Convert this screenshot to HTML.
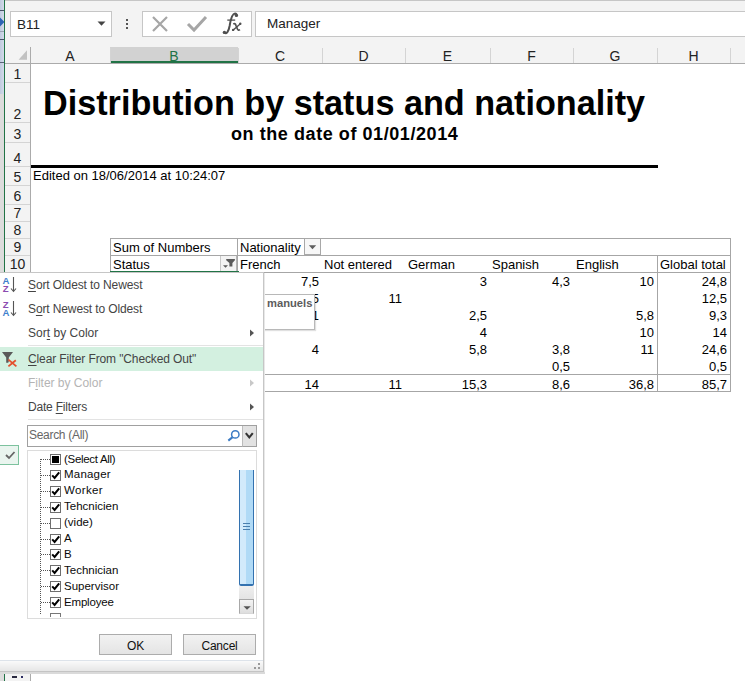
<!DOCTYPE html>
<html><head><meta charset="utf-8">
<style>
*{margin:0;padding:0;box-sizing:border-box}
html,body{width:745px;height:681px;overflow:hidden;background:#fff;font-family:"Liberation Sans",sans-serif;color:#000}
.a{position:absolute}
.t{position:absolute;white-space:nowrap;line-height:1}
.r{position:absolute;white-space:nowrap;line-height:1;text-align:right}
.ch{position:absolute;top:48.5px;height:14px;font-size:14px;line-height:14px;text-align:center;color:#222}
.rh{position:absolute;left:5px;width:25px;font-size:14px;text-align:center;color:#222;line-height:1}
.v{position:absolute;font-size:13px;line-height:1;text-align:right;white-space:nowrap}
.mi{position:absolute;left:28px;font-size:12px;letter-spacing:-0.2px;line-height:1;color:#444;white-space:nowrap}
u{text-decoration:underline;text-underline-offset:1.5px}
.li{position:absolute;left:64px;font-size:11.5px;line-height:1;color:#0a0a0a;white-space:nowrap}
</style></head><body>
<div class="a" style="left:0px;top:0px;width:4px;height:94px;background:linear-gradient(90deg,#bfcade,#d3dbea)"></div>
<div class="a" style="left:0px;top:94px;width:4px;height:587px;background:#dcdcdc"></div>
<div class="a" style="left:0px;top:10px;width:4px;height:1px;background:#4a5468"></div>
<div class="a" style="left:0px;top:31px;width:4px;height:1px;background:#9aa3b3"></div>
<div class="a" style="left:0px;top:39px;width:4px;height:1px;background:#4a5468"></div>
<div class="a" style="left:0px;top:62px;width:4px;height:1px;background:#5a6478"></div>
<svg class="a" style="left:0;top:17px" width="5" height="10"><path d="M0 0.5 L4.5 5 L0 9.5 Z" fill="#2d64b4"/></svg>
<div class="a" style="left:4px;top:0px;width:1px;height:681px;background:#217346"></div>
<div class="a" style="left:5px;top:0px;width:740px;height:47px;background:#f3f3f3"></div>
<div class="a" style="left:5px;top:0px;width:740px;height:1px;background:#c6c6c6"></div>
<div class="a" style="left:10px;top:11px;width:102px;height:26px;background:#fff;border:1px solid #c6c6c6"></div>
<div class="t" style="left:17px;top:18px;font-size:13.5px;color:#222">B11</div>
<svg class="a" style="left:97px;top:21px" width="9" height="6"><path d="M0.5 0.5 H8.5 L4.5 4.8 Z" fill="#444"/></svg>
<div class="a" style="left:126px;top:19px;width:2px;height:2px;background:#555"></div>
<div class="a" style="left:126px;top:23px;width:2px;height:2px;background:#555"></div>
<div class="a" style="left:126px;top:27px;width:2px;height:2px;background:#555"></div>
<div class="a" style="left:142px;top:11px;width:110px;height:26px;background:#fff;border:1px solid #c6c6c6"></div>
<svg class="a" style="left:150px;top:14px" width="100" height="22" viewBox="0 0 100 22">
<path d="M3 3 L17 17 M17 3 L3 17" stroke="#a6a6a6" stroke-width="2.2" fill="none"/>
<path d="M38 10 L44 16 L56 3" stroke="#a6a6a6" stroke-width="3" fill="none"/>
</svg>
<svg class="a" style="left:215px;top:10px" width="35" height="30" viewBox="0 0 35 30">
<path d="M9.2 22.6 C11.5 24.5 13.6 21.5 14.6 16 C15.6 9.5 17 3.6 20 3.5 C21.3 3.5 21.8 4.4 21.5 5.3" stroke="#4f4f4f" stroke-width="2" fill="none"/>
<circle cx="21.4" cy="5.4" r="1.7" fill="#4f4f4f"/>
<circle cx="9.4" cy="22.4" r="1.7" fill="#4f4f4f"/>
<path d="M12.3 10.1 H20.2" stroke="#4f4f4f" stroke-width="1.3"/>
<path d="M18.3 13.9 C19.6 13.2 20.4 13.8 21 15.5 L22.4 19 C22.9 20.3 23.8 20.4 25 19.6" stroke="#4f4f4f" stroke-width="1.7" fill="none"/>
<path d="M25.4 13.8 L18 20.2" stroke="#4f4f4f" stroke-width="1.4"/>
<circle cx="25.3" cy="13.8" r="1.2" fill="#4f4f4f"/>
<circle cx="18.1" cy="19.9" r="1.2" fill="#4f4f4f"/>
</svg>
<div class="a" style="left:255px;top:11px;width:495px;height:26px;background:#fff;border:1px solid #c6c6c6"></div>
<div class="t" style="left:267px;top:17px;font-size:13.5px;color:#222">Manager</div>
<div class="a" style="left:5px;top:47px;width:740px;height:16px;background:#f3f3f3"></div>
<div class="a" style="left:5px;top:63px;width:740px;height:1px;background:#ababab"></div>
<div class="a" style="left:110px;top:47px;width:128px;height:16px;background:#d2d2d2"></div>
<div class="a" style="left:110px;top:61px;width:128px;height:2px;background:#217346"></div>
<div class="ch" style="left:30px;width:80px;color:#222">A</div>
<div class="ch" style="left:110px;width:128px;color:#217346">B</div>
<div class="a" style="left:110px;top:48px;width:1px;height:15px;background:#d4d4d4"></div>
<div class="ch" style="left:238px;width:84px;color:#222">C</div>
<div class="a" style="left:238px;top:48px;width:1px;height:15px;background:#d4d4d4"></div>
<div class="ch" style="left:322px;width:83px;color:#222">D</div>
<div class="a" style="left:322px;top:48px;width:1px;height:15px;background:#d4d4d4"></div>
<div class="ch" style="left:405px;width:85px;color:#222">E</div>
<div class="a" style="left:405px;top:48px;width:1px;height:15px;background:#d4d4d4"></div>
<div class="ch" style="left:490px;width:83px;color:#222">F</div>
<div class="a" style="left:490px;top:48px;width:1px;height:15px;background:#d4d4d4"></div>
<div class="ch" style="left:573px;width:84px;color:#222">G</div>
<div class="a" style="left:573px;top:48px;width:1px;height:15px;background:#d4d4d4"></div>
<div class="ch" style="left:657px;width:73px;color:#222">H</div>
<div class="a" style="left:657px;top:48px;width:1px;height:15px;background:#d4d4d4"></div>
<div class="ch" style="left:730px;width:70px;color:#222"></div>
<div class="a" style="left:730px;top:48px;width:1px;height:15px;background:#d4d4d4"></div>
<svg class="a" style="left:14px;top:50px" width="14" height="12"><path d="M13 0.3 L13 9.7 L4.6 9.7 Z" fill="#c2c2c2"/></svg>
<div class="a" style="left:5px;top:64px;width:25px;height:617px;background:#f3f3f3"></div>
<div class="a" style="left:30px;top:47px;width:1px;height:634px;background:#ababab"></div>
<div class="rh" style="top:67px">1</div>
<div class="a" style="left:5px;top:82px;width:25px;height:1px;background:#d4d4d4"></div>
<div class="rh" style="top:107px">2</div>
<div class="a" style="left:5px;top:122px;width:25px;height:1px;background:#d4d4d4"></div>
<div class="rh" style="top:127px">3</div>
<div class="a" style="left:5px;top:142px;width:25px;height:1px;background:#d4d4d4"></div>
<div class="rh" style="top:151px">4</div>
<div class="a" style="left:5px;top:166px;width:25px;height:1px;background:#d4d4d4"></div>
<div class="rh" style="top:170px">5</div>
<div class="a" style="left:5px;top:185px;width:25px;height:1px;background:#d4d4d4"></div>
<div class="rh" style="top:189px">6</div>
<div class="a" style="left:5px;top:204px;width:25px;height:1px;background:#d4d4d4"></div>
<div class="rh" style="top:206px">7</div>
<div class="a" style="left:5px;top:221px;width:25px;height:1px;background:#d4d4d4"></div>
<div class="rh" style="top:223px">8</div>
<div class="a" style="left:5px;top:238px;width:25px;height:1px;background:#d4d4d4"></div>
<div class="rh" style="top:240px">9</div>
<div class="a" style="left:5px;top:255px;width:25px;height:1px;background:#d4d4d4"></div>
<div class="rh" style="top:257px">10</div>
<div class="a" style="left:5px;top:272px;width:25px;height:1px;background:#d4d4d4"></div>
<div class="a" style="left:12px;top:676px;width:5px;height:2px;background:#2a2a40"></div>
<div class="a" style="left:21px;top:676px;width:2px;height:2px;background:#2a2a60"></div>
<div class="t" style="left:43px;top:86px;font-size:34.2px;font-weight:bold">Distribution by status and nationality</div>
<div class="t" style="left:231px;top:125px;font-size:18px;font-weight:bold;letter-spacing:0.57px">on the date of 01/01/2014</div>
<div class="a" style="left:31px;top:165px;width:627px;height:3px;background:#000"></div>
<div class="t" style="left:33px;top:169px;font-size:13px">Edited on 18/06/2014 at 10:24:07</div>
<div class="a" style="left:110px;top:238px;width:621px;height:1px;background:#a6a6a6"></div>
<div class="a" style="left:110px;top:255px;width:621px;height:1px;background:#a6a6a6"></div>
<div class="a" style="left:110px;top:272px;width:621px;height:1px;background:#a6a6a6"></div>
<div class="a" style="left:110px;top:374px;width:621px;height:1px;background:#a6a6a6"></div>
<div class="a" style="left:110px;top:391px;width:621px;height:1px;background:#a6a6a6"></div>
<div class="a" style="left:110px;top:238px;width:1px;height:154px;background:#a6a6a6"></div>
<div class="a" style="left:237px;top:238px;width:1px;height:154px;background:#a6a6a6"></div>
<div class="a" style="left:657px;top:255px;width:1px;height:137px;background:#a6a6a6"></div>
<div class="a" style="left:730px;top:238px;width:1px;height:154px;background:#a6a6a6"></div>
<div class="a" style="left:110px;top:271px;width:129px;height:2px;background:#217346"></div>
<div class="t" style="left:113px;top:241px;font-size:13px">Sum of Numbers</div>
<div class="t" style="left:113px;top:258px;font-size:13px">Status</div>
<div class="t" style="left:240px;top:241px;font-size:13px">Nationality</div>
<div class="a" style="left:304px;top:238px;width:17px;height:17px;background:#f7f7f7;border:1px solid #a8a8a8"></div>
<svg class="a" style="left:308px;top:245px" width="9" height="5"><path d="M0.8 0.3 H8.2 L4.5 4.3 Z" fill="#5e5e5e"/></svg>
<div class="a" style="left:220px;top:256px;width:17px;height:15px;background:#f3f3f3;border-left:1px solid #c8c8c8;border-right:1px solid #b4b4b4"></div>
<svg class="a" style="left:222px;top:258px" width="15" height="12"><path d="M4.2 1 H12.9 V2.2 L10.4 5 V8.4 H7.4 V5 L4.2 2.2 Z" fill="#5a5a5a"/><path d="M1 7.2 H6 L3.5 9.8 Z" fill="#5a5a5a"/></svg>
<div class="t" style="left:240px;top:258px;font-size:13px">French</div>
<div class="t" style="left:324px;top:258px;font-size:13px">Not entered</div>
<div class="t" style="left:408px;top:258px;font-size:13px">German</div>
<div class="t" style="left:492px;top:258px;font-size:13px">Spanish</div>
<div class="t" style="left:576px;top:258px;font-size:13px">English</div>
<div class="t" style="left:660px;top:258px;font-size:13px">Global total</div>
<div class="v" style="right:426px;top:275px">7,5</div>
<div class="v" style="right:258px;top:275px">3</div>
<div class="v" style="right:175px;top:275px">4,3</div>
<div class="v" style="right:91px;top:275px">10</div>
<div class="v" style="right:18px;top:275px">24,8</div>
<div class="v" style="right:426px;top:292px">1,5</div>
<div class="v" style="right:343px;top:292px">11</div>
<div class="v" style="right:18px;top:292px">12,5</div>
<div class="v" style="right:426px;top:309px">1</div>
<div class="v" style="right:258px;top:309px">2,5</div>
<div class="v" style="right:91px;top:309px">5,8</div>
<div class="v" style="right:18px;top:309px">9,3</div>
<div class="v" style="right:258px;top:326px">4</div>
<div class="v" style="right:91px;top:326px">10</div>
<div class="v" style="right:18px;top:326px">14</div>
<div class="v" style="right:426px;top:343px">4</div>
<div class="v" style="right:258px;top:343px">5,8</div>
<div class="v" style="right:175px;top:343px">3,8</div>
<div class="v" style="right:91px;top:343px">11</div>
<div class="v" style="right:18px;top:343px">24,6</div>
<div class="v" style="right:175px;top:360px">0,5</div>
<div class="v" style="right:18px;top:360px">0,5</div>
<div class="v" style="right:426px;top:378px">14</div>
<div class="v" style="right:343px;top:378px">11</div>
<div class="v" style="right:258px;top:378px">15,3</div>
<div class="v" style="right:175px;top:378px">8,6</div>
<div class="v" style="right:91px;top:378px">36,8</div>
<div class="v" style="right:18px;top:378px">85,7</div>
<div class="a" style="left:250px;top:294px;width:65px;height:36px;background:#fff;border:1px solid #b8b8b8;box-shadow:1px 1px 1px rgba(0,0,0,0.12)"></div>
<div class="t" style="left:267px;top:298px;font-size:11.2px;font-weight:bold;color:#5c5c5c">manuels</div>
<div class="a" style="left:0px;top:272px;width:264px;height:401px;background:#fff"></div>
<div class="a" style="left:0px;top:272px;width:264px;height:1px;background:#c6c6c6"></div>
<div class="a" style="left:263px;top:272px;width:1px;height:401px;background:#c6c6c6"></div>
<div class="a" style="left:264px;top:273px;width:1px;height:401px;background:#e8e8e8"></div>
<div class="a" style="left:0px;top:671px;width:264px;height:1px;background:#c4c4c4"></div>
<div class="a" style="left:0px;top:672px;width:265px;height:2px;background:#dadada"></div>
<svg class="a" style="left:0;top:274px" width="20" height="46" viewBox="0 0 20 46">
<g font-family="Liberation Sans" font-weight="bold" font-size="9.6">
<text x="2.4" y="9.8" fill="#3f7fcc">A</text>
<text x="2.8" y="17.8" fill="#8b4cb0">Z</text>
<text x="2.8" y="34" fill="#8b4cb0">Z</text>
<text x="2.4" y="42" fill="#3f7fcc">A</text>
</g>
<path d="M13.5 3 V17.5 M11 14.5 L13.5 17.5 L16 14.5 M13.5 27 V41.5 M11 38.5 L13.5 41.5 L16 38.5" stroke="#555" stroke-width="1.1" fill="none"/>
</svg>
<div class="a" style="left:28px;top:345px;width:235px;height:1px;background:#e3e3e3"></div>
<div class="a" style="left:0px;top:347px;width:263px;height:24px;background:#d3f0e0"></div>
<div class="a" style="left:28px;top:419px;width:235px;height:1px;background:#e3e3e3"></div>
<div class="mi" style="top:279px;color:#444;letter-spacing:-0.11px"><u>S</u>ort Oldest to Newest</div>
<div class="mi" style="top:303px;color:#444;letter-spacing:-0.12px">S<u>o</u>rt Newest to Oldest</div>
<div class="mi" style="top:327px;color:#444;letter-spacing:0.02px">Sor<u>t</u> by Color</div>
<div class="mi" style="top:352.5px;color:#444;letter-spacing:-0.12px"><u>C</u>lear Filter From "Checked Out"</div>
<div class="mi" style="top:376.5px;color:#b4b4b4;letter-spacing:-0.02px">F<u>i</u>lter by Color</div>
<div class="mi" style="top:400.5px;color:#444;letter-spacing:-0.2px">Date <u>F</u>ilters</div>
<svg class="a" style="left:249px;top:328.5px" width="6" height="8"><path d="M1 0.5 L5 4 L1 7.5 Z" fill="#555"/></svg>
<svg class="a" style="left:249px;top:378.5px" width="6" height="8"><path d="M1 0.5 L5 4 L1 7.5 Z" fill="#c8c8c8"/></svg>
<svg class="a" style="left:249px;top:402.5px" width="6" height="8"><path d="M1 0.5 L5 4 L1 7.5 Z" fill="#555"/></svg>
<svg class="a" style="left:0;top:350px" width="20" height="18" viewBox="0 0 20 18">
<path d="M2 1.9 H13 L8.8 7.5 V11.6 L8.2 12.8 H6.2 V7.5 Z" fill="#5a5a5a"/>
<path d="M8.4 9.6 L16.4 16.4 M15.8 10.2 L8.4 16.4" stroke="#e4502e" stroke-width="1.8"/>
</svg>
<div class="a" style="left:27px;top:425px;width:230px;height:22px;background:#fff;border:1px solid #a0a0a0"></div>
<div class="t" style="left:29px;top:429px;font-size:12px;letter-spacing:-0.3px;color:#666">Search (All)</div>
<svg class="a" style="left:226px;top:428px" width="16" height="16" viewBox="0 0 16 16">
<circle cx="9.3" cy="6.4" r="3.7" stroke="#3d7cc4" stroke-width="1.5" fill="none"/>
<path d="M6.6 9.1 L2.3 12.6" stroke="#3d7cc4" stroke-width="2"/>
</svg>
<div class="a" style="left:242px;top:426px;width:15px;height:21px;background:#e2e2e2;border-left:1px solid #bcbcbc;border-right:1px solid #a0a0a0;border-bottom:1px solid #a0a0a0"></div>
<svg class="a" style="left:244px;top:431px" width="11" height="9"><path d="M1.8 2.2 L5.3 6.4 L8.8 2.2" stroke="#333" stroke-width="2.1" fill="none"/></svg>
<div class="a" style="left:27px;top:450px;width:230px;height:169px;background:#fff;border:1px solid #dcdcdc"></div>
<div class="a" style="left:40px;top:459px;width:1px;height:155px;border-left:1px dotted #555"></div>
<div class="a" style="left:41px;top:459.0px;width:9px;height:1px;border-top:1px dotted #555"></div>
<div class="a" style="left:50px;top:454px;width:11px;height:11px;background:#fff;border:1px solid #6e6e6e"></div>
<div class="a" style="left:52px;top:456px;width:7px;height:7px;background:#000"></div>
<div class="li" style="top:453.5px;letter-spacing:-0.3px">(Select All)</div>
<div class="a" style="left:41px;top:474.9px;width:9px;height:1px;border-top:1px dotted #555"></div>
<div class="a" style="left:50px;top:470px;width:11px;height:11px;background:#fff;border:1px solid #6e6e6e"></div>
<svg class="a" style="left:51px;top:471px" width="9" height="9" viewBox="0 0 9 9"><path d="M1.2 4.4 L3.6 7 L8.2 1.3" stroke="#000" stroke-width="2" fill="none"/></svg>
<div class="li" style="top:469.4px;letter-spacing:0.2px">Manager</div>
<div class="a" style="left:41px;top:490.8px;width:9px;height:1px;border-top:1px dotted #555"></div>
<div class="a" style="left:50px;top:486px;width:11px;height:11px;background:#fff;border:1px solid #6e6e6e"></div>
<svg class="a" style="left:51px;top:487px" width="9" height="9" viewBox="0 0 9 9"><path d="M1.2 4.4 L3.6 7 L8.2 1.3" stroke="#000" stroke-width="2" fill="none"/></svg>
<div class="li" style="top:485.3px;letter-spacing:0.35px">Worker</div>
<div class="a" style="left:41px;top:506.7px;width:9px;height:1px;border-top:1px dotted #555"></div>
<div class="a" style="left:50px;top:502px;width:11px;height:11px;background:#fff;border:1px solid #6e6e6e"></div>
<svg class="a" style="left:51px;top:503px" width="9" height="9" viewBox="0 0 9 9"><path d="M1.2 4.4 L3.6 7 L8.2 1.3" stroke="#000" stroke-width="2" fill="none"/></svg>
<div class="li" style="top:501.2px;letter-spacing:0px">Tehcnicien</div>
<div class="a" style="left:41px;top:522.6px;width:9px;height:1px;border-top:1px dotted #555"></div>
<div class="a" style="left:50px;top:518px;width:11px;height:11px;background:#fff;border:1px solid #6e6e6e"></div>
<div class="li" style="top:517.1px;letter-spacing:0px">(vide)</div>
<div class="a" style="left:41px;top:538.5px;width:9px;height:1px;border-top:1px dotted #555"></div>
<div class="a" style="left:50px;top:534px;width:11px;height:11px;background:#fff;border:1px solid #6e6e6e"></div>
<svg class="a" style="left:51px;top:535px" width="9" height="9" viewBox="0 0 9 9"><path d="M1.2 4.4 L3.6 7 L8.2 1.3" stroke="#000" stroke-width="2" fill="none"/></svg>
<div class="li" style="top:533.0px;letter-spacing:0px">A</div>
<div class="a" style="left:41px;top:554.4px;width:9px;height:1px;border-top:1px dotted #555"></div>
<div class="a" style="left:50px;top:549px;width:11px;height:11px;background:#fff;border:1px solid #6e6e6e"></div>
<svg class="a" style="left:51px;top:550px" width="9" height="9" viewBox="0 0 9 9"><path d="M1.2 4.4 L3.6 7 L8.2 1.3" stroke="#000" stroke-width="2" fill="none"/></svg>
<div class="li" style="top:548.9px;letter-spacing:0px">B</div>
<div class="a" style="left:41px;top:570.3px;width:9px;height:1px;border-top:1px dotted #555"></div>
<div class="a" style="left:50px;top:565px;width:11px;height:11px;background:#fff;border:1px solid #6e6e6e"></div>
<svg class="a" style="left:51px;top:566px" width="9" height="9" viewBox="0 0 9 9"><path d="M1.2 4.4 L3.6 7 L8.2 1.3" stroke="#000" stroke-width="2" fill="none"/></svg>
<div class="li" style="top:564.8px;letter-spacing:0px">Technician</div>
<div class="a" style="left:41px;top:586.2px;width:9px;height:1px;border-top:1px dotted #555"></div>
<div class="a" style="left:50px;top:581px;width:11px;height:11px;background:#fff;border:1px solid #6e6e6e"></div>
<svg class="a" style="left:51px;top:582px" width="9" height="9" viewBox="0 0 9 9"><path d="M1.2 4.4 L3.6 7 L8.2 1.3" stroke="#000" stroke-width="2" fill="none"/></svg>
<div class="li" style="top:580.7px;letter-spacing:0px">Supervisor</div>
<div class="a" style="left:41px;top:602.1px;width:9px;height:1px;border-top:1px dotted #555"></div>
<div class="a" style="left:50px;top:597px;width:11px;height:11px;background:#fff;border:1px solid #6e6e6e"></div>
<svg class="a" style="left:51px;top:598px" width="9" height="9" viewBox="0 0 9 9"><path d="M1.2 4.4 L3.6 7 L8.2 1.3" stroke="#000" stroke-width="2" fill="none"/></svg>
<div class="li" style="top:596.6px;letter-spacing:-0.18px">Employee</div>
<div class="a" style="left:50px;top:613px;width:11px;height:4px;border:1px solid #777;border-bottom:none;background:#fff"></div>
<div class="a" style="left:239px;top:470px;width:15px;height:116px;background:linear-gradient(90deg,#d2eafb 0,#d2eafb 45%,#b0daf6 45%,#b0daf6 100%);border:1px solid #3372b0;border-width:0 1px 2px 1px;border-radius:0 0 2px 2px"></div>
<div class="a" style="left:243px;top:523px;width:7px;height:1px;background:#4a7fae"></div>
<div class="a" style="left:243px;top:526px;width:7px;height:1px;background:#4a7fae"></div>
<div class="a" style="left:243px;top:529px;width:7px;height:1px;background:#4a7fae"></div>
<div class="a" style="left:239px;top:586px;width:15px;height:13px;background:linear-gradient(#efefef,#e4e4e4)"></div>
<div class="a" style="left:239px;top:599px;width:15px;height:15px;background:linear-gradient(#f4f4f4,#dedede);border:1px solid #a8a8a8;border-bottom-color:#d8d8d8"></div>
<svg class="a" style="left:243px;top:606px" width="9" height="5"><path d="M0.5 0.3 L7.8 0.3 L4 3.8 Z" fill="#555"/></svg>
<div class="a" style="left:99px;top:634px;width:73px;height:21px;background:linear-gradient(#f2f2f2,#e4e4e4);border:1px solid #acacac"></div>
<div class="t" style="left:99px;top:640px;width:73px;text-align:center;font-size:12px;letter-spacing:-0.2px;color:#111">OK</div>
<div class="a" style="left:183px;top:634px;width:73px;height:21px;background:linear-gradient(#f2f2f2,#e4e4e4);border:1px solid #acacac"></div>
<div class="t" style="left:183px;top:640px;width:73px;text-align:center;font-size:12px;letter-spacing:-0.2px;color:#111">Cancel</div>
<div class="a" style="left:0px;top:660px;width:263px;height:1px;background:#dde3ea"></div>
<div class="a" style="left:0px;top:661px;width:263px;height:10px;background:linear-gradient(#fafafa,#e6e6e6)"></div>
<div class="a" style="left:258px;top:663px;width:2px;height:2px;background:#9a9a9a"></div>
<div class="a" style="left:254px;top:667px;width:2px;height:2px;background:#9a9a9a"></div>
<div class="a" style="left:258px;top:667px;width:2px;height:2px;background:#9a9a9a"></div>
<div class="a" style="left:0px;top:445px;width:19px;height:20px;background:#eaf5ef;border:1px solid #7dc29e;border-left:none"></div>
<svg class="a" style="left:4px;top:450px" width="12" height="10"><path d="M2 5 L5 8 L10.5 2" stroke="#666" stroke-width="1.8" fill="none"/></svg>
</body></html>
